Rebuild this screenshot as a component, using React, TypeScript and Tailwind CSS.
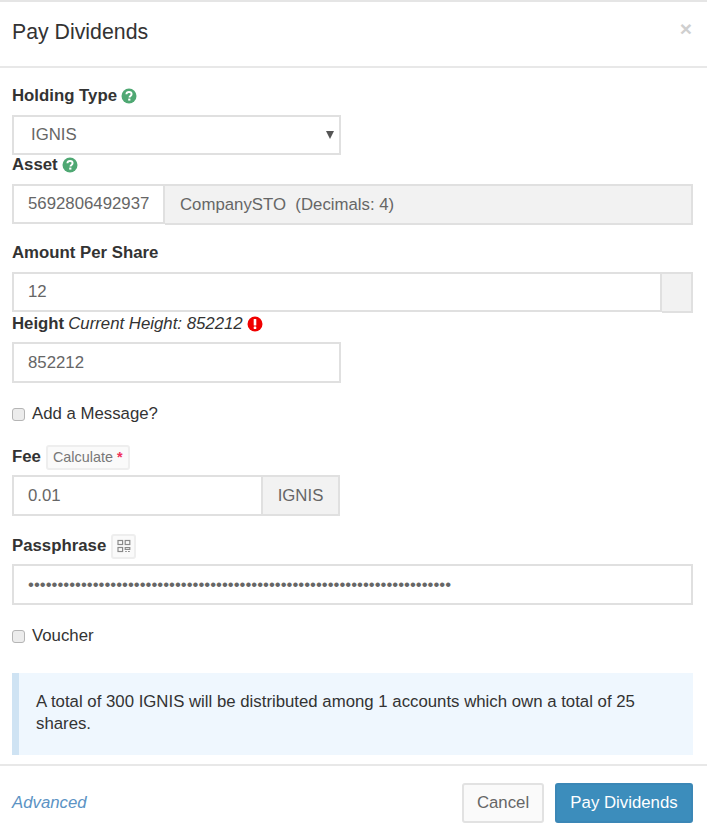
import React from 'react';

const inputClass =
  'h-full w-full border-2 border-[#e0e0e0] bg-white px-[14px] text-[16.8px] text-[#666] outline-none';

const HelpIcon = () => (
  <svg viewBox="0 0 16 16" className="h-4 w-4 shrink-0">
    <circle cx="8" cy="8" r="7.5" fill="#4fa873" />
    <path d="M5.4 6.2C5.5 4.7 6.6 4 8 4c1.5 0 2.6.8 2.6 2.1 0 1.9-2.1 1.8-2.1 3.4" fill="none" stroke="#fff" strokeWidth="1.9" />
    <rect x="7.2" y="10.6" width="2.2" height="2" fill="#fff" />
  </svg>
);

const AlertIcon = () => (
  <svg viewBox="0 0 16 16" className="h-4 w-4 shrink-0">
    <circle cx="8" cy="8" r="7.5" fill="#f00000" />
    <rect x="6.7" y="3" width="2.6" height="6.6" rx="0.6" fill="#fff" />
    <rect x="6.7" y="10.6" width="2.6" height="2.4" rx="0.4" fill="#fff" />
  </svg>
);

const QrIcon = () => (
  <svg viewBox="0 0 14 14" className="h-[14px] w-[14px]" fill="none" stroke="#8a8a8a" strokeWidth="1.2">
    <rect x="1" y="1.5" width="4.6" height="4" />
    <rect x="8.2" y="1.5" width="4.6" height="4" />
    <rect x="1" y="8.5" width="4.6" height="4" />
    <path d="M8.2 8.5h4.6v1.8H8.2zM8.2 12.5h1.6M11 12.5h1.8" />
  </svg>
);

const Check = ({ label }: { label: string }) => (
  <label className="flex items-center gap-[7px] text-[16.8px] leading-[24px] text-[#333]">
    <span className="h-[13px] w-[13px] rounded-[3px] border border-[#b5b5b5] bg-[#ececec]" />
    {label}
  </label>
);

export default function App() {
  return (
    <div className="min-h-[836px] w-[707px] bg-white font-['Liberation_Sans',Arial,sans-serif] text-[#333]">
      {/* Header */}
      <div className="flex h-[68px] items-center justify-between border-y-2 border-t-[#e5e5e5] border-b-[#e8e8e8] pl-3 pr-[15px]">
        <h4 className="mb-[2px] text-[21.3px] text-[#333]">Pay Dividends</h4>
        <span className="mb-3 text-[21px] font-bold leading-none text-[#cfcfcf]">×</span>
      </div>

      {/* Form */}
      <div className="pl-3 pr-[14px]">
        <div className="mt-[18px] flex h-5 items-center gap-[4px] text-[16.8px] font-bold">
          Holding Type <HelpIcon />
        </div>
        <div className="relative mt-[9px] h-10 w-[329px]">
          <select className="h-full w-full appearance-none border-2 border-[#e0e0e0] bg-white pl-[17px] text-[16.8px] text-[#666] outline-none">
            <option>IGNIS</option>
          </select>
          <span className="pointer-events-none absolute right-[7px] top-[16px] h-0 w-0 border-x-[4px] border-t-[8px] border-x-transparent border-t-[#555]" />
        </div>

        <div className="flex h-5 items-center gap-[4px] text-[16.8px] font-bold">
          Asset <HelpIcon />
        </div>
        <div className="mt-[9px] flex h-10">
          <div className="h-full w-[153px]">
            <input readOnly value="5692806492937" className={inputClass} />
          </div>
          <div className="flex h-[41px] flex-1 items-center border-2 border-l-0 border-[#e0e0e0] bg-[#f2f2f2] pl-[15px] text-[16.8px] text-[#666] whitespace-pre">
            CompanySTO  (Decimals: 4)
          </div>
        </div>

        <div className="mt-[19px] flex h-5 items-center text-[16.8px] font-bold">Amount Per Share</div>
        <div className="mt-[9px] flex h-10">
          <div className="h-full flex-1">
            <input readOnly value="12" className={inputClass} />
          </div>
          <div className="h-[41px] w-[31px] border-2 border-l-0 border-[#e0e0e0] bg-[#f2f2f2]" />
        </div>

        <div className="mt-[2px] flex h-5 items-center gap-[4px] text-[16.8px]">
          <span className="font-bold">Height</span>
          <em>Current Height: 852212</em>
          <AlertIcon />
        </div>
        <div className="mt-[8px] h-[41px] w-[329px]">
          <input readOnly value="852212" className={inputClass} />
        </div>

        <div className="mt-[19px]">
          <Check label="Add a Message?" />
        </div>

        <div className="mt-[19px] flex h-6 items-center gap-[5px] text-[16.8px] font-bold">
          Fee
          <span className="rounded-[3px] border-2 border-[#eeeeee] bg-[#fafafa] px-[5px] py-[1px] text-[14.4px] font-normal leading-[19px] text-[#777]">
            Calculate <span className="font-bold text-[#f0305a]">*</span>
          </span>
        </div>
        <div className="mt-[6px] flex h-[41px] w-[328px]">
          <div className="h-full flex-1">
            <input readOnly value="0.01" className={inputClass} />
          </div>
          <div className="flex h-full w-[77px] items-center justify-center border-2 border-l-0 border-[#e0e0e0] bg-[#f2f2f2] text-[16.8px] text-[#666]">
            IGNIS
          </div>
        </div>

        <div className="mt-[18px] flex h-6 items-center gap-[5px] text-[16.8px] font-bold">
          Passphrase
          <span className="flex h-[25px] w-[25px] items-center justify-center rounded-[3px] border-2 border-[#eeeeee] bg-[#fafafa]">
            <QrIcon />
          </span>
        </div>
        <div className="mt-[6px] h-[41px]">
          <input readOnly type="password" value={'x'.repeat(72)} className={inputClass} />
        </div>

        <div className="mt-[19px]">
          <Check label="Voucher" />
        </div>

        {/* Callout */}
        <div className="mt-[25px] h-[82px] border-l-[7px] border-[#cfe3f3] bg-[#eff7fe] pl-[17px] pr-[40px] pt-[18px] text-[16.8px] leading-[22px] text-[#333]">
          A total of 300 IGNIS will be distributed among 1 accounts which own a total of 25 shares.
        </div>
      </div>

      {/* Footer */}
      <div className="mt-[9px] flex items-center justify-between border-t-2 border-[#e8e8e8] pl-3 pr-[14px] pt-[17px]">
        <a className="text-[16.8px] italic text-[#5b93c4]">Advanced</a>
        <div className="flex gap-[11px]">
          <button className="h-10 w-[82px] rounded-[3px] border-2 border-[#e2e2e2] bg-[#fafafa] text-[16.8px] text-[#666]">
            Cancel
          </button>
          <button className="h-10 w-[138px] rounded-[3px] border-2 border-[#3b87b6] bg-[#3c8dbc] text-[16.8px] text-white">
            Pay Dividends
          </button>
        </div>
      </div>
    </div>
  );
}
